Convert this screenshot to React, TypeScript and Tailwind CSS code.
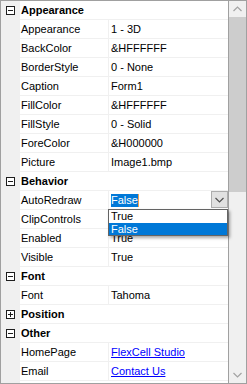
import React from "react";

type Row =
  | { kind: "cat"; name: string; open: boolean }
  | { kind: "prop"; name: string; value: string; link?: boolean; edit?: boolean };

// ClipControls value sits under the open drop-down list, so it's not drawn
const rows: Row[] = [
  { kind: "cat", name: "Appearance", open: true },
  { kind: "prop", name: "Appearance", value: "1 - 3D" },
  { kind: "prop", name: "BackColor", value: "&HFFFFFF" },
  { kind: "prop", name: "BorderStyle", value: "0 - None" },
  { kind: "prop", name: "Caption", value: "Form1" },
  { kind: "prop", name: "FillColor", value: "&HFFFFFF" },
  { kind: "prop", name: "FillStyle", value: "0 - Solid" },
  { kind: "prop", name: "ForeColor", value: "&H000000" },
  { kind: "prop", name: "Picture", value: "Image1.bmp" },
  { kind: "cat", name: "Behavior", open: true },
  { kind: "prop", name: "AutoRedraw", value: "False", edit: true },
  { kind: "prop", name: "ClipControls", value: "" },
  { kind: "prop", name: "Enabled", value: "True" },
  { kind: "prop", name: "Visible", value: "True" },
  { kind: "cat", name: "Font", open: true },
  { kind: "prop", name: "Font", value: "Tahoma" },
  { kind: "cat", name: "Position", open: false },
  { kind: "cat", name: "Other", open: true },
  { kind: "prop", name: "HomePage", value: "FlexCell Studio", link: true },
  { kind: "prop", name: "Email", value: "Contact Us", link: true },
];

const ToggleBox = ({ open }: { open: boolean }) => (
  <svg width="9" height="9" viewBox="0 0 9 9" className="block">
    <rect x="0.5" y="0.5" width="8" height="8" fill="#fff" stroke="#1e1e1e" />
    <line x1="2" y1="4.5" x2="7" y2="4.5" stroke="#1e1e1e" />
    {!open && <line x1="4.5" y1="2" x2="4.5" y2="7" stroke="#1e1e1e" />}
  </svg>
);

const Chevron = ({ up, color }: { up?: boolean; color: string }) => (
  <svg width="9" height="6" viewBox="0 0 9 6" className="block">
    <polyline
      points={up ? "0.5,5 4.5,1 8.5,5" : "0.5,1 4.5,5 8.5,1"}
      fill="none"
      stroke={color}
      strokeWidth="1.2"
    />
  </svg>
);

const DropDownEditor = () => (
  <div className="relative flex-1 flex items-center h-full">
    <span className="ml-[2px] bg-[#0078d7] text-white leading-[13px]">False</span>
    <span className="w-[1px] h-[13px] bg-[#f0a050]" />
    <div className="ml-auto w-[17px] h-[17px] mb-[1px] bg-[#e1e1e1] border border-[#adadad] flex items-center justify-center">
      <Chevron color="#505050" />
    </div>
    <div className="absolute left-[-1px] top-[18px] w-[120px] bg-white border border-[#646464] shadow-[2px_2px_3px_rgba(0,0,0,0.35)] z-10">
      <div className="h-[13px] leading-[13px] pl-[2px]">True</div>
      <div className="h-[12px] leading-[12px] pl-[2px] bg-[#0078d7] text-white">False</div>
    </div>
  </div>
);

export default function App() {
  return (
    <div
      className="w-[247px] h-[384px] border border-[#a0a0a0] flex bg-white text-[11px] text-black select-none"
      style={{ fontFamily: "Tahoma, 'Liberation Sans', Arial, sans-serif" }}
    >
      <div className="w-[227px] flex flex-col">
        {rows.map((r, i) => (
          <div key={i} className="flex h-[19px] shrink-0">
            <div className="w-[19px] bg-[#f0f0f0] flex items-center justify-center">
              {r.kind === "cat" && <ToggleBox open={r.open} />}
            </div>
            {r.kind === "cat" ? (
              <div className="flex-1 flex items-center border-b border-[#f0f0f0] pl-[1px] font-bold">
                {r.name}
              </div>
            ) : (
              <div className="flex-1 flex border-b border-[#f0f0f0]">
                <div className="w-[89px] flex items-center pl-[1px] border-r border-[#f0f0f0]">
                  {r.name}
                </div>
                {r.edit ? (
                  <DropDownEditor />
                ) : (
                  <div className="flex-1 flex items-center pl-[2px]">
                    {r.link ? (
                      <span className="text-[#0000ff] underline">{r.value}</span>
                    ) : (
                      r.value
                    )}
                  </div>
                )}
              </div>
            )}
          </div>
        ))}
        <div className="flex-1 flex">
          <div className="w-[19px] bg-[#f0f0f0]" />
        </div>
      </div>
      <div className="w-[18px] border-l border-[#a0a0a0] bg-[#f0f0f0] flex flex-col">
        <div className="h-[16px] flex items-center justify-center">
          <Chevron up color="#a3a3a3" />
        </div>
        <div className="h-[175px] bg-[#cdcdcd]" />
        <div className="flex-1" />
        <div className="h-[16px] flex items-center justify-center">
          <Chevron color="#a3a3a3" />
        </div>
      </div>
    </div>
  );
}
